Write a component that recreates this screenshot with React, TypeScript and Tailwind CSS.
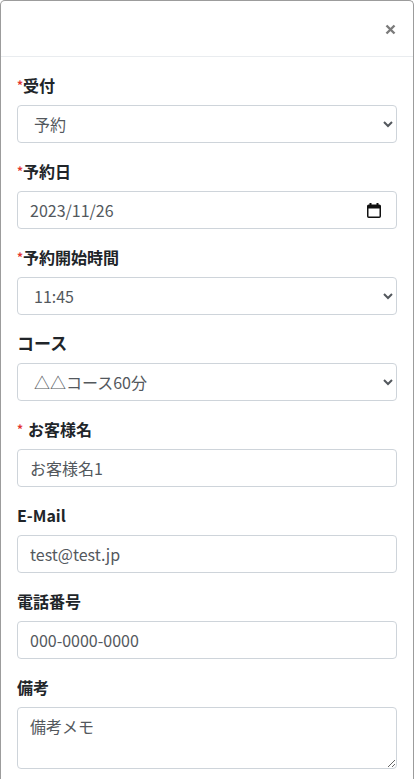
import type { ReactNode } from "react";

const fieldBase =
  "block h-[38px] w-full rounded-[4px] border border-[#ced4da] bg-white px-3 text-base leading-6 text-[#53585d] outline-none";

function Label({ children, required, spaced }: { children: ReactNode; required?: boolean; spaced?: boolean }) {
  return (
    <label className="mb-2 block text-base font-bold leading-6 text-[#212529]">
      {required && (
        <span className={"align-[2px] text-[12px] font-bold text-[#e3342f]" + (spaced ? " mr-[5px]" : "")}>*</span>
      )}
      {children}
    </label>
  );
}

function CalendarIcon() {
  return (
    <svg width="14" height="15" viewBox="0 0 14 15" aria-hidden="true">
      <rect x="2.5" y="0" width="2" height="3" fill="#111" />
      <rect x="9.5" y="0" width="2" height="3" fill="#111" />
      <rect x="0.75" y="2.25" width="12.5" height="12" rx="1" fill="none" stroke="#111" strokeWidth="1.5" />
      <rect x="0.75" y="2.25" width="12.5" height="3.25" fill="#111" />
    </svg>
  );
}

export default function App() {
  return (
    <div
      className="min-h-[779px] bg-white"
      style={{ fontFamily: '"Noto Sans CJK JP", "Noto Sans", sans-serif' }}
    >
      <div className="rounded-t-[5px] border border-b-0 border-[#9c9c9c]">
        <div className="flex h-[56px] items-center justify-end border-b border-[#e9ecef] pr-[17px]">
          <button type="button" aria-label="Close" className="mt-[1px] p-0">
            <svg width="11" height="11" viewBox="0 0 11 11" aria-hidden="true">
              <path d="M1.5 1.5 L9.5 9.5 M9.5 1.5 L1.5 9.5" stroke="#7b7b7b" strokeWidth="2.4" strokeLinecap="butt" />
            </svg>
          </button>
        </div>

        <form className="p-4">
          <div className="mb-4">
            <Label required>受付</Label>
            <select className={fieldBase} defaultValue="予約">
              <option>予約</option>
              <option>来店</option>
            </select>
          </div>

          <div className="mb-4">
            <Label required>予約日</Label>
            <div className={fieldBase + " flex items-center justify-between pr-[15px]"}>
              <span>2023/11/26</span>
              <CalendarIcon />
            </div>
          </div>

          <div className="mb-4">
            <Label required>予約開始時間</Label>
            <select className={fieldBase} defaultValue="11:45">
              <option>11:30</option>
              <option>11:45</option>
              <option>12:00</option>
            </select>
          </div>

          <div className="mb-4">
            <Label>
              <span className="text-[17px]">コース</span>
            </Label>
            <select className={fieldBase} defaultValue="△△コース60分">
              <option>〇〇コース30分</option>
              <option>△△コース60分</option>
            </select>
          </div>

          <div className="mb-4">
            <Label required spaced>
              お客様名
            </Label>
            <input className={fieldBase} type="text" defaultValue="お客様名1" />
          </div>

          <div className="mb-4">
            <Label>E-Mail</Label>
            <input className={fieldBase} type="email" defaultValue="test@test.jp" />
          </div>

          <div className="mb-4">
            <Label>電話番号</Label>
            <input className={fieldBase} type="tel" defaultValue="000-0000-0000" />
          </div>

          <div className="mb-4">
            <Label>備考</Label>
            <textarea
              rows={2}
              className="block h-[62px] w-full resize-y rounded-[4px] border border-[#ced4da] bg-white px-3 py-1.5 text-base leading-6 text-[#53585d] outline-none"
              defaultValue="備考メモ"
            />
          </div>
        </form>
      </div>
    </div>
  );
}
